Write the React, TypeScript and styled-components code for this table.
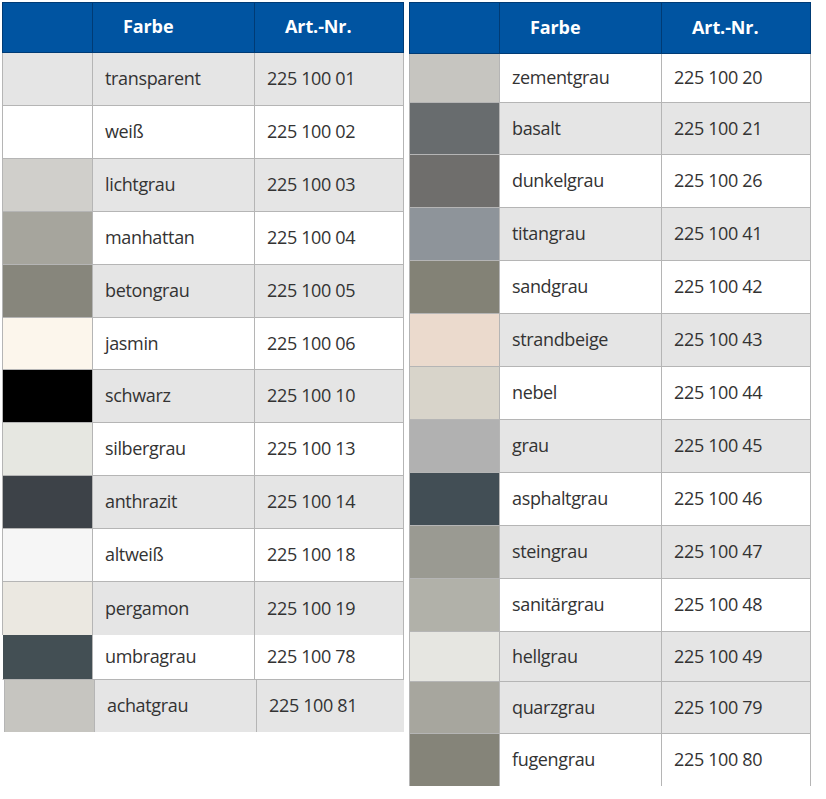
import React from 'react';
import styled, { createGlobalStyle } from 'styled-components';

const Global = createGlobalStyle`
  html, body { margin: 0; padding: 0; background: #ffffff; }
  body { font-family: "Open Sans", "Noto Sans", sans-serif; }
  * { box-sizing: border-box; }
`;

const LINE = '#b5b5b5';
const BLUE = '#0054a1';
const BLUE_DARK = '#003b75';
const GRAY = '#e5e5e5';

const Page = styled.div`
  display: flex;
  align-items: flex-start;
  gap: 5px;
  padding: 2px 0 0 2px;
`;

const Column = styled.div`
  display: flex;
  flex-direction: column;
  align-items: flex-start;
`;

const Table = styled.div<{ $width: number; $shift?: number }>`
  display: flex;
  flex-direction: column;
  width: ${p => p.$width}px;
  margin-left: ${p => p.$shift ?? 0}px;
`;

const Header = styled.div<{ $h: number }>`
  display: grid;
  grid-template-columns: 90px 162px 1fr;
  height: ${p => p.$h}px;
  background: ${BLUE};
  border: 1px solid ${BLUE_DARK};
`;

const HeadCell = styled.div<{ $last?: boolean }>`
  display: flex;
  align-items: center;
  padding: 0 0 3px 30px;
  color: #ffffff;
  font-weight: 700;
  font-size: 18px;
  letter-spacing: -0.1px;
  border-right: ${p => (p.$last ? 'none' : `1px solid ${BLUE_DARK}`)};
`;

const Row = styled.div<{ $h: number; $bg: string; $bottom: boolean; $left: boolean; $right: boolean }>`
  display: grid;
  grid-template-columns: 90px 162px 1fr;
  height: ${p => p.$h}px;
  background: ${p => p.$bg};
  border-left: 1px solid ${p => (p.$left ? LINE : '#ffffff')};
  border-right: ${p => (p.$right ? `1px solid ${LINE}` : 'none')};
  border-bottom: ${p => (p.$bottom ? `1px solid ${LINE}` : 'none')};
`;

const Swatch = styled.div<{ $color: string }>`
  background: ${p => p.$color};
  border-right: 1px solid ${LINE};
`;

const TextCell = styled.div<{ $divider?: boolean }>`
  display: flex;
  align-items: center;
  padding: 0 0 2px 12px;
  color: #333333;
  font-size: 18px;
  letter-spacing: -0.35px;
  border-right: ${p => (p.$divider ? `1px solid ${LINE}` : 'none')};
`;

type Item = {
  name: string;
  nr: string;
  color: string;
  bg: 'g' | 'w';
  h: number;
  bottom?: boolean;
  left?: boolean;
};

const leftItems: Item[] = [
  { name: 'transparent', nr: '225 100 01', color: GRAY, bg: 'g', h: 53 },
  { name: 'weiß', nr: '225 100 02', color: '#ffffff', bg: 'w', h: 53 },
  { name: 'lichtgrau', nr: '225 100 03', color: '#d0cfcb', bg: 'g', h: 53 },
  { name: 'manhattan', nr: '225 100 04', color: '#a6a59d', bg: 'w', h: 53 },
  { name: 'betongrau', nr: '225 100 05', color: '#87867c', bg: 'g', h: 53 },
  { name: 'jasmin', nr: '225 100 06', color: '#fcf6ec', bg: 'w', h: 52 },
  { name: 'schwarz', nr: '225 100 10', color: '#000000', bg: 'g', h: 53 },
  { name: 'silbergrau', nr: '225 100 13', color: '#e6e7e1', bg: 'w', h: 53 },
  { name: 'anthrazit', nr: '225 100 14', color: '#3d4248', bg: 'g', h: 53 },
  { name: 'altweiß', nr: '225 100 18', color: '#f6f6f6', bg: 'w', h: 53 },
  { name: 'pergamon', nr: '225 100 19', color: '#ebe8e1', bg: 'g', h: 53, bottom: false },
  { name: 'umbragrau', nr: '225 100 78', color: '#434f54', bg: 'w', h: 45, left: false },
];

const extraItem: Item = { name: 'achatgrau', nr: '225 100 81', color: '#c6c5c0', bg: 'g', h: 52, bottom: false };

const rightItems: Item[] = [
  { name: 'zementgrau', nr: '225 100 20', color: '#c6c5c0', bg: 'w', h: 49 },
  { name: 'basalt', nr: '225 100 21', color: '#686c6e', bg: 'g', h: 52 },
  { name: 'dunkelgrau', nr: '225 100 26', color: '#6f6e6c', bg: 'w', h: 53 },
  { name: 'titangrau', nr: '225 100 41', color: '#8e949a', bg: 'g', h: 53 },
  { name: 'sandgrau', nr: '225 100 42', color: '#838276', bg: 'w', h: 53 },
  { name: 'strandbeige', nr: '225 100 43', color: '#ebdacd', bg: 'g', h: 53 },
  { name: 'nebel', nr: '225 100 44', color: '#d8d4ca', bg: 'w', h: 53 },
  { name: 'grau', nr: '225 100 45', color: '#b1b1b1', bg: 'g', h: 53 },
  { name: 'asphaltgrau', nr: '225 100 46', color: '#424e55', bg: 'w', h: 53 },
  { name: 'steingrau', nr: '225 100 47', color: '#9a9a92', bg: 'g', h: 53 },
  { name: 'sanitärgrau', nr: '225 100 48', color: '#b1b1a9', bg: 'w', h: 53 },
  { name: 'hellgrau', nr: '225 100 49', color: '#e6e6e1', bg: 'g', h: 50 },
  { name: 'quarzgrau', nr: '225 100 79', color: '#a7a69e', bg: 'g', h: 52 },
  { name: 'fugengrau', nr: '225 100 80', color: '#858479', bg: 'w', h: 52, bottom: false },
];

const ColorRow: React.FC<{ item: Item; right?: boolean }> = ({ item, right = true }) => (
  <Row
    $h={item.h}
    $bg={item.bg === 'g' ? GRAY : '#ffffff'}
    $bottom={item.bottom !== false}
    $left={item.left !== false}
    $right={right}
  >
    <Swatch $color={item.color} />
    <TextCell $divider>{item.name}</TextCell>
    <TextCell>{item.nr}</TextCell>
  </Row>
);

const TableHead: React.FC<{ h: number }> = ({ h }) => (
  <Header $h={h}>
    <HeadCell />
    <HeadCell>Farbe</HeadCell>
    <HeadCell $last>Art.-Nr.</HeadCell>
  </Header>
);

export default function App() {
  return (
    <>
      <Global />
      <Page>
        <Column>
          <Table $width={402}>
            <TableHead h={51} />
            {leftItems.map(it => (
              <ColorRow key={it.name} item={it} />
            ))}
          </Table>
          <Table $width={400} $shift={2}>
            <ColorRow item={extraItem} right={false} />
          </Table>
        </Column>
        <Table $width={402}>
          <TableHead h={52} />
          {rightItems.map(it => (
            <ColorRow key={it.name} item={it} />
          ))}
        </Table>
      </Page>
    </>
  );
}
